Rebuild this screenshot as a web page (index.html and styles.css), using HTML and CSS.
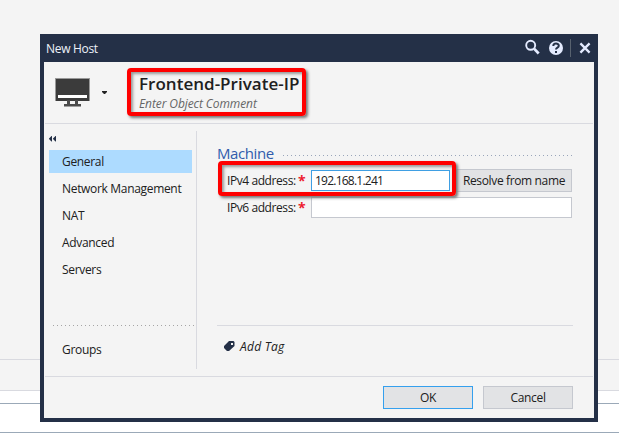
FILE: index.html
```html
<!DOCTYPE html>
<html lang="en">
<head>
<meta charset="utf-8">
<title>New Host</title>
<link rel="stylesheet" href="styles.css">
</head>
<body>
<div class="backdrop"><div class="strip"></div><div class="gap"></div><div class="panel"></div></div>
<section class="dialog">
  <header class="titlebar">
    <span class="title">New Host</span>
    <svg class="tools" width="70" height="20" viewBox="0 0 70 20" fill="none" stroke="#e4ebff">
      <circle cx="5.700" cy="7.300" r="4.500" stroke-width="1.9"/><path d="M9.300 10.800L13.700 15.500" stroke-width="2.7"/>
      <circle cx="31" cy="10" r="7" fill="#e4ebff" stroke="none"/>
      <path d="M28.3 8C28.3 4.8 33.8 4.8 33.8 7.8C33.8 9.7 31 9.5 31 11.6M31 13v2" stroke="#243047" stroke-width="2"/>
      <path d="M45.5 1v18" stroke="#58626f"/>
      <path d="M55.400 5.400L64.600 14.600M64.600 5.400L55.400 14.600" stroke-width="2.300"/>
    </svg>
  </header>
  <div class="identity">
    <svg class="monitor" width="36" height="30" viewBox="0 0 36 30">
      <path fill="#999" d="M0 0h35v23H0z"/><path fill="#3b3b3b" d="M1 1h33v22H1z"/>
      <path fill="#fff" d="M3 17h29v3H3z"/>
      <path fill="#4b4b4b" d="M12 22h3v4h5v-4h3v4h3v2.500H9V26h3z"/>
    </svg>
    <svg class="caret" width="6" height="4" viewBox="0 0 6 4"><path fill="#222" d="M0 0h5v1L3 3H2L0 1z"/></svg>
    <div class="names"><h1><span>Frontend-Private-IP</span></h1><p><span>Enter Object Comment</span></p></div>
  </div>
  <div class="main">
    <nav class="sidebar">
      <svg class="collapse" width="8" height="6" viewBox="0 0 8 6"><path fill="#243047" d="M0 2.500L2.500 0H3v5.500h-.5L0 3zM4 2.500L6.500 0H7v5.500h-.5L4 3z"/></svg>
      <a class="item selected">General</a>
      <a class="item network"><span>Network Management</span></a>
      <a class="item">NAT</a>
      <a class="item">Advanced</a>
      <a class="item">Servers</a>
      <div class="dots side-dots"></div>
      <a class="item">Groups</a>
    </nav>
    <div class="content">
      <div class="section-title"><h2>Machine</h2><div class="dots section-dots"></div></div>
      <div class="field first"><label>IPv4 address:</label><b>*</b><div class="input focused"><span>192.168.1.241</span></div><div class="button resolve"><span>Resolve from name</span></div></div>
      <div class="field"><label>IPv6 address:</label><b>*</b><div class="input wide"></div></div>
      <div class="tags">
        <svg width="11" height="11" viewBox="0 0 11 11"><path fill="#243047" fill-rule="evenodd" d="M5 0H9.500L10.500 1v4L5 10H3L0 7V5zM7 2v2h2V2z"/></svg>
        <span>Add Tag</span>
      </div>
    </div>
  </div>
  <footer class="actions"><div class="button ok">OK</div><div class="button cancel">Cancel</div></footer>
  <div class="mark mark-name"></div>
  <div class="mark mark-address"></div>
</section>
</body>
</html>
```
FILE: styles.css
```css
* { box-sizing: border-box; }
body { margin: 0; height: 440px; overflow: hidden; background: #f4f4f4; color: #202020; font: 12px/16px "Open Sans", "Noto Sans", sans-serif; letter-spacing: -0.32px; }
h1, h2, p { margin: 0; }
svg { display: block; flex: none; }
.backdrop { height: 440px; padding-top: 359px; }
.strip { height: 32px; border: solid #d9dae0; border-width: 1px 0; }
.gap { height: 12px; background: #fff; }
.panel { height: 37px; background: linear-gradient(#9ba9b8, #9ba9b8) 0 28px / 100% 1px no-repeat #fff; border-top: 1px solid #9ba9b8; }
.dialog { position: absolute; left: 40px; top: 34px; width: 558px; height: 388px; border: 4px solid #243047; border-top: 0; background: #f4f4f4; display: flex; flex-direction: column; white-space: nowrap; }
.titlebar { height: 28px; background: #243047; color: #eef2fa; display: flex; align-items: center; justify-content: space-between; padding-left: 2px; }
.title { padding-top: 1px; letter-spacing: -0.3px; }
.tools { margin-right: -1px; }
.identity { height: 62px; margin: 0 1px; border-bottom: 1px solid #d9dae0; display: flex; align-items: flex-start; }
.monitor { margin: 16px 0 0 10px; }
.caret { margin: 29px 0 0 11px; }
.names { padding: 11px 0 0 31px; }
h1 { font-size: 17px; line-height: 22px; font-weight: 600; letter-spacing: 0.02px; }
.names p { font-size: 12px; line-height: 18px; font-style: italic; letter-spacing: -0.09px; color: #666; }
.main { height: 252px; display: flex; padding-top: 7px; }
.sidebar { width: 153px; height: 238px; border-right: 1px solid #d9dae0; padding: 5px 0 0 5px; display: flex; flex-direction: column; }
.collapse { margin-bottom: 8px; }
.item { width: 143px; height: 23px; line-height: 23px; padding-left: 13px; margin-bottom: 4px; }
.selected { background: #addbff; }
.dots { height: 1px; }
.side-dots { margin: 40px 0 12px 4px; background: repeating-linear-gradient(90deg, #a5a5a5 0 1px, transparent 1px 4px); }
.content { width: 356px; margin-left: 20px; }
.section-title { display: flex; align-items: center; height: 34px; padding-top: 10px; }
h2 { font-weight: 400; font-size: 15px; line-height: 22px; color: #315cac; width: 66px; letter-spacing: -0.4px; }
.section-dots { flex: 1; margin-top: 4px; background: repeating-linear-gradient(90deg, #99a5ba 0 1px, transparent 1px 4px); }
.field { height: 27px; padding-left: 10px; display: flex; align-items: center; }
.first { margin-top: 2px; }
.field label { width: 71px; letter-spacing: -0.42px; }
.field b { width: 13px; color: #ed1c2e; font-size: 14px; }
.input { width: 139px; height: 21px; border: 1px solid #c5c8cf; background: #fff; line-height: 19px; padding-left: 3px; letter-spacing: -0.77px; }
.focused { border-color: #3f9fe3; }
.wide { width: 261px; }
.button { height: 23px; border: 1px solid #c5c8cf; background: #e2e3e5; line-height: 21px; text-align: center; }
.resolve { width: 116px; margin-left: 6px; letter-spacing: -0.36px; }
.tags { margin-top: 104px; border-top: 1px solid #d9dae0; height: 43px; padding-left: 7px; display: flex; align-items: center; font-style: italic; letter-spacing: 0.25px; }
.tags svg { margin: 0 5px 2px 0; }
.actions { height: 42px; margin: 0 1px; border-top: 1px solid #d9dae0; display: flex; justify-content: flex-end; gap: 10px; padding: 9px 20px 0 0; }
.actions .button { width: 90px; }
.actions .ok { border-color: #35a0ee; }
.mark { position: absolute; border: 4px solid #f00; border-radius: 4px; box-shadow: 2px 2px 3px #777, inset 2px 2px 3px #999; }
.mark-name { left: 83px; top: 34px; width: 179px; height: 48px; }
.mark-address { left: 174px; top: 127px; width: 238px; height: 35px; }
```
